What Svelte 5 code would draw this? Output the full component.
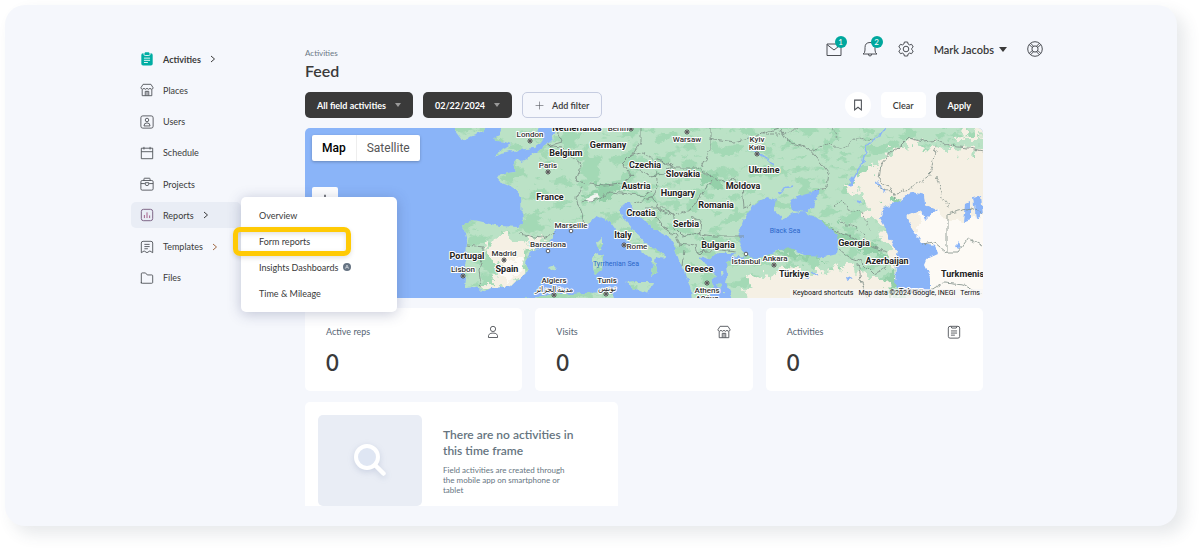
<script>
	let navItems = [
		{name: "Activities", icon: "clipboard", arrow: true, current: true},
		{name: "Places", icon: "store"},
		{name: "Users", icon: "contact"},
		{name: "Schedule", icon: "calendar"},
		{name: "Projects", icon: "briefcase"},
		{name: "Reports", icon: "chart", arrow: true, open: true},
		{name: "Templates", icon: "template", arrow: true, warm: true},
		{name: "Files", icon: "folder"},
	]
	let reportItems = [
		{name: "Overview"},
		{name: "Form reports", marked: true},
		{name: "Insights Dashboards", badge: true},
		{name: "Time & Mileage"},
	]
	let stats = [
		{name: "Active reps", value: 0, icon: "person"},
		{name: "Visits", value: 0, icon: "store"},
		{name: "Activities", value: 0, icon: "list"},
	]

	let mapType = "Map"

	// map labels, x/y is the middle of the text
	let countries = [
		["Netherlands", 577, 128], ["Germany", 608, 145], ["Belgium", 566, 153], ["France", 550, 197],
		["Czechia", 645, 165], ["Slovakia", 683, 174], ["Austria", 636, 186], ["Hungary", 678, 193],
		["Romania", 716, 205], ["Croatia", 641, 213], ["Serbia", 686, 224], ["Italy", 623, 235],
		["Bulgaria", 718, 245], ["Greece", 699, 269], ["Ukraine", 764, 170], ["Moldova", 743, 186],
		["Portugal", 467, 256], ["Spain", 507, 269], ["Georgia", 854, 243], ["Azerbaijan", 887, 261],
		["Türkiye", 794, 274], ["Turkmenistan", 969, 274],
	]
	let cities = [
		["London", 530, 134], ["Berlin", 618, 128], ["Paris", 548, 165], ["Warsaw", 687, 139],
		["Kyiv", 757, 139], ["Київ", 757, 147], ["Marseille", 571, 225], ["Barcelona", 548, 244],
		["Rome", 637, 246], ["Algiers", 554, 280], ["مدينة الجزائر", 554, 289], ["Tunis", 607, 280],
		["تونس", 607, 288], ["Athens", 707, 290], ["Αθήνα", 707, 298], ["İstanbul", 746, 261],
		["Lisbon", 463, 269], ["Madrid", 504, 253], ["Ankara", 775, 258], ["Tehran", 911, 290],
	]
	let capitals = [
		[530, 141], [631, 129], [548, 172], [687, 132], [757, 154], [624, 245], [554, 295],
		[606, 294], [707, 283], [463, 276], [504, 260], [774, 265],
	]
	let towns = [[571, 231], [548, 251], [746, 254]]
</script>

{#snippet icon(name)}
	<svg class="icon" viewBox="0 0 16 16" aria-hidden="true">
		{#if name === "clipboard"}
			<rect x="1.500" y="1.500" width="13" height="14" rx="2" fill="#00ada3" stroke="none" />
			<path d="M4.500 1v1.600q0 1.400 1.400 1.400h4.200q1.400 0 1.400-1.400V1" stroke="#f5f7fc" />
			<rect x="5.500" y=".3" width="5" height="2.500" rx=".6" fill="#00ada3" stroke="none" />
			<path d="M4.500 7h7M4.500 9.500h7M4.500 12h4.500" stroke="#fff" />
		{:else if name === "store"}
			<path d="M3.500 1.500h9l2.500 4q-.3 1.700-1.800 1.700T11.500 5.800Q10.800 7.200 9.700 7.200T8 5.800Q7.300 7.200 6.200 7.200T4.500 5.800Q4 7.200 2.800 7.200T1 5.500zM2.500 7.500V14.500h11V7.500M6 14.500V9.500h4v5M8 9.500v5" />
		{:else if name === "contact"}
			<rect x="1" y="1" width="14" height="14" rx="2.200" />
			<circle cx="8" cy="5.700" r="2" />
			<path d="M4.500 12.500q0-3.500 3.500-3.500t3.500 3.500z" />
		{:else if name === "calendar"}
			<path d="M1.500 2.500h13v12h-13zM1.500 6.500h13M4.500 1v3M11.500 1v3" />
		{:else if name === "briefcase"}
			<rect x="1" y="4" width="14" height="11" rx="1.500" />
			<path d="M4.500 4V2.200q0-.8.8-.8h5.400q.8 0 .8.800V4M1 7.500h4.500M10.500 7.500H15M6 6.500h4v1.700q0 1.600-2 1.600t-2-1.600z" />
		{:else if name === "chart"}
			<rect x="1.500" y="1.500" width="13" height="13" rx="2.500" stroke="#6f5478" />
			<path d="M5 8v3.500M8 5v6.500M11 8.500v3" stroke="#9b4c7c" />
		{:else if name === "template"}
			<path d="M1.500 14.500V3.500q0-2 2-2h9q2 0 2 2v11l-3.200-2-3.300 2-3.300-2zM5 5h6M5 7.500h6M5 10h4" />
		{:else if name === "folder"}
			<path d="M1.500 14V3.200q0-1 1-1h3.800l2 2.300H13.500q1 0 1 1V13q0 1-1 1h-11q-1 0-1-1z" />
		{:else if name === "person"}
			<circle cx="8" cy="4.500" r="3" />
			<path d="M2.800 14.300q-.6-5.100 5.200-5.100t5.200 5.100z" />
		{:else if name === "list"}
			<rect x="1.500" y="1.500" width="13" height="13.500" rx="2" />
			<path d="M4.500 1.500l1 2h5l1-2M4.500 6.800h7M4.500 9.200h7M4.500 11.600h4.500" />
		{:else if name === "mail"}
			<path d="M1 3h14v11.500H1zM1 3.500l7 5.500 7-5.500" />
		{:else if name === "bell"}
			<path d="M1 13q2-.8 2-4V6.500Q3 1.500 8 1.500t5 5V9q0 3.200 2 4zM6.300 13q.1 2 1.700 2t1.700-2" />
		{:else if name === "gear"}
			<path d="M6.400 1h3.200l.5 2 1.500.9 2-.6 1.600 2.700-1.500 1.400v1.200l1.500 1.400-1.600 2.700-2-.6-1.500.9-.5 2H6.400l-.5-2-1.500-.9-2 .6L.8 10l1.500-1.400V7.400L.8 6l1.600-2.700 2 .6L5.900 3z" />
			<circle cx="8" cy="8" r="2.800" />
		{:else if name === "help"}
			<circle cx="8" cy="8" r="7.300" />
			<circle cx="8" cy="8" r="3.100" />
			<path d="M2.300 3.600l3 3M3.600 2.300l3 3M13.700 3.600l-3 3M12.400 2.300l-3 3M2.300 12.400l3-3M3.600 13.700l3-3M13.700 12.400l-3-3M12.400 13.700l-3-3" />
		{:else if name === "bookmark"}
			<path d="M3.500 1.500h9v13l-4.500-3.500-4.500 3.500z" />
		{:else if name === "plus"}
			<path d="M8 1v14M1 8h14" />
		{/if}
	</svg>
{/snippet}

<div class="panel">
	<aside>
		<ul class="nav">
			{#each navItems as item (item.name)}
				<li class:open={item.open}>
					<a href="#{item.name}" class:current={item.current}>
						{@render icon(item.icon)}
						<span>{item.name}</span>
						{#if item.arrow}
							<svg class="arrow" class:warm={item.warm} viewBox="0 0 6 8" aria-hidden="true"><path d="M1 1l3.500 3L1 7" /></svg>
						{/if}
					</a>
					{#if item.open}
						<ul class="submenu">
							{#each reportItems as report (report.name)}
								<li class:marked={report.marked}>
									<a href="#{report.name}">
										{report.name}
										{#if report.badge}
											<svg class="badgeIcon" viewBox="0 0 8 8" aria-hidden="true">
												<circle cx="4" cy="4" r="4" fill="#667382" />
												<path d="M2.300 5.700L4 2l1.700 3.700M3 4.600h2" fill="none" stroke="#cfd5dc" stroke-width=".8" />
											</svg>
										{/if}
									</a>
								</li>
							{/each}
						</ul>
					{/if}
				</li>
			{/each}
		</ul>
	</aside>

	<main>
		<header>
			<div class="titles">
				<p>Activities</p>
				<h1>Feed</h1>
			</div>
			<div class="topbar">
				<button class="topIcon" aria-label="Messages">{@render icon("mail")}<span class="count">1</span></button>
				<button class="topIcon" aria-label="Notifications">{@render icon("bell")}<span class="count">2</span></button>
				<button class="topIcon" aria-label="Settings">{@render icon("gear")}</button>
				<button class="user">Mark Jacobs <span class="caret"></span></button>
				<button class="topIcon" aria-label="Help">{@render icon("help")}</button>
			</div>
		</header>

		<div class="content">
			<div class="toolbar">
				<button class="dark">All field activities <span class="caret"></span></button>
				<button class="dark">02/22/2024 <span class="caret"></span></button>
				<button class="outline">{@render icon("plus")}Add filter</button>
				<button class="round" aria-label="Saved filters">{@render icon("bookmark")}</button>
				<button class="light">Clear</button>
				<button class="dark">Apply</button>
			</div>

			<section class="map" aria-label="Map">
				<svg class="mapCanvas" viewBox="305 128 678 170" preserveAspectRatio="xMidYMid slice">
					<defs>
						<filter id="coast" filterUnits="userSpaceOnUse" x="295" y="118" width="700" height="190">
							<feTurbulence type="fractalNoise" baseFrequency=".16" numOctaves="2" seed="4" />
							<feDisplacementMap in="SourceGraphic" scale="6" xChannelSelector="R" yChannelSelector="G" />
						</filter>
						<!-- woodland patches -->
						<filter id="woods" filterUnits="userSpaceOnUse" x="295" y="118" width="700" height="190" color-interpolation-filters="sRGB">
							<feTurbulence type="fractalNoise" baseFrequency=".05 .09" numOctaves="4" seed="11" />
							<feColorMatrix values="0 0 0 0 .64  0 0 0 0 .85  0 0 0 0 .71  14 0 0 0 -7.400" />
							<feComposite in2="SourceGraphic" operator="in" />
						</filter>
						<!-- breaks up the edge of the dry land -->
						<filter id="ragged" filterUnits="userSpaceOnUse" x="295" y="118" width="700" height="190">
							<feTurbulence type="fractalNoise" baseFrequency=".09" numOctaves="3" seed="7" />
							<feDisplacementMap in="SourceGraphic" scale="26" xChannelSelector="R" yChannelSelector="G" />
						</filter>
						<path id="land" d="M451 122l5 10 6 8 8-3 13-5 4-10zM502 122v6l-3 7-5 3 4 3 7 1 6 2-7 4-7 4-3 5 8-4 8-2 6 1 9-3 9-1 7-5 2-5-5-4-1-10zM556 122l-1 10-3 7-7 7-8 6-8 4-4 4-4 2-4-3-3 4 2 9-8 1-11 3 2 5 8 3 8 5 6 7 1 27-4 4-18-1-27-6-10 6 4 14-1 22-4 10 4 6-1 10 11-1 5 5 11-4 20-2 9-9 8-6-3-9 6-11 15-6 7-8v-10l18 1 15-4 10-8 12 5 7 10 13 11 13 9 7 6 5 7-3 13 7-5-3-10 1-6 9 2-4-7-16-8-10-11-10-11-5-10 5-9h6l4 10 10 9 13 10 13 7 4 11 5 14 5 8 3 10 3 10 1 10 17-4 5-10-3-8 5-4-10-9-7-10 10 3 10-6h17l-10 9 2 12-2 9 4 8 5 16H995V122zM500 303l28-4 25-5 20 0 30-2 9 0 4 12zM597 241l5-3v11l-3 2zM593 257l4-4 6 3-1 14-6 4-3-6zM625 283l12-1 16 0-5 12-14-6zM548 267l5-2 3 3-4 3zM720 272l3 0 1 3-4 1zM717 284l4 1-2 3zM722 291l3 0-1 3z" />
						<clipPath id="landClip"><use href="#land" /></clipPath>
					</defs>

					<rect x="295" y="118" width="700" height="190" fill="#8ab4f8" />
					<g filter="url(#coast)">
						<use href="#land" fill="#bbe2c6" />
						<use href="#land" filter="url(#woods)" />
						<g clip-path="url(#landClip)">
							<g filter="url(#ragged)">
								<!-- dry land -->
								<g fill="#f5f0e4">
									<path d="M490 243l10-6 18 3 14-2-2 14-6 14 4 8-12 10-16 6-18 0 8-10 10-3 2-8-12-10-2-8zM530 240l13 0 3 4-12 4z" />
									<path d="M748 308l-2-19 6-12 20-4 20-4 24 3 20-6 22 3 14 8 14 0 8 12 2 22z" />
									<path d="M845 186l12-12 16-4 6-10 12-8 10-8 10-2 12 5 14-3 12 6 64 2v162H905l-10-30-6-40-10-22-14-12-6-14z" />
									<path d="M954 138l12-8 20-2 22-4v10l-32 4z" />
								</g>
								<path d="M925 212l30 6 50-4v100h-80l-8-34 4-28-12-20z" fill="#fdfaf5" />
								<path d="M504 262l12-4 8 8-6 10-10 2z" fill="#fdfaf5" />
								<g fill="#94d0a9">
									<path d="M805 215l22 6 18 14 24 10 18 10-4 3-24-8-18-8-16-10z" />
									<path d="M763 254l24-8 20 8 24 2-20 5-26-6z" />
									<path d="M590 190l14-4 22-2 8 4-16 8-20 5-10-2zM700 172l10 2 16 12-4 4-18-8z" />
									<path d="M885 205l14-6 4 3-16 10zM886 276l8-2 2 16-6 4z" />
								</g>
							</g>
							<path d="M585 198l10-5 5 3-12 7z" fill="#f3f5f1" />
						</g>
						<!-- seas and lakes -->
						<g fill="#8ab4f8">
							<path d="M742 252l-4-15 6-18 8-12 8-6 7-4 10 3-4 10 10 9 10-6 12-1 11 6 16 12 8 10-3 14-12 3-18-1-17-9-13 4-14 6-10 1z" />
							<path d="M728 258l10-2 8 1-6 4-10 0z" />
							<path d="M789 203l5-5 9-3 18-5-6 10-2 9-8 3-12-2z" />
							<path d="M880 218l3-10 17-8 12-8 12 3 1 10 12 5-7 5-5 5-4-10-14 6 6 14 9 13 12 2 4 8-11 5-3 7 6 13v14l-8 3-27-7 1-27 2-10-9-13-5-13z" />
							<path d="M964 222l2-18 4-2 0 18zM973 198l8-2 2 18-7 4zM955 246l4-4 2 5-4 2z" />
							<path d="M848 184l4-8 2 4-4 6zM846 278l5-2 2 2-6 3zM805 279l4-3 1 4z" />
						</g>
						<path class="river" d="M888 122l-8 14-14 10-3 16-10 18M780 194l4-6 9-2M752 150l14 8 8 8M856 200l6 2M876 182l10 10M812 272l6 4" />
						<path class="border" d="M547 145l14 2 8 8 10 6 1 8-4 12 10 2M582 186l-6 12 2 8 4 6 2 16M556 232l-16 6-20-4M467 245l16 2 0 10-4 12 2 20M590 184l14 2 18-2 10-8-10-12 8-8 12-4 14 8 16 4-8 10-14 2-16-8M582 202l14-2 14-8 20 2 14 2 8-6M641 128l0 14-8 12M656 158l18 10 24 0 10 8 18 6 10-5M710 128l0 22-8 18M708 138l26 4 22-6 24-8M656 172l2 16-6 10 8 12 14 6 16-6 10-14 12-16M730 178l12 8 2 22 8-4M690 216l12 6-2 12 14 2 30 0M652 198l-18 4M646 208l18 0 10 8 0 12 8 8 20-4M654 214l10 14 12 8 4 8 16 2 2 10M702 236l2 14-6 6M684 250l-2 16M696 252l24-2 16 2M556 128l6 14-14 4" />
						<path class="border" d="M780 130l8 12 20 6 14 16 6 8-2 16-12 4M832 230l22 8 20 10 14 4M840 250l10 8 12 4 12 12 12-6 6-8M858 264l4 20 6 14M895 198l-4-10-12-8 2-16 10-12 10-6 8-8 14 4 14-2 12 6 20 2 20 4M922 244l12-2 12 10h12l10-14 14 8M947 252v-38l24-6 14 6M930 291l14-8 20 2 18 10" />
						<path class="border dashed" d="M760 134l24 0 14-6M812 150l16-6 14 4 16-10 14 2M832 128l6 12M834 206l8-6 6 10 14 2 8 18M878 186l16 8 12-4 24-14 6-30M936 176l6 22 8 10M840 222l14 4 12 12" />
					</g>

					{#each countries as [name, x, y]}
						<text class="country" {x} y={y + 3}>{name}</text>
					{/each}
					{#each cities as [name, x, y]}
						<text class="city" {x} y={y + 3}>{name}</text>
					{/each}
					<text class="sea" x="785" y="233">Black Sea</text>
					<text class="sea" x="616" y="266">Tyrrhenian Sea</text>
					{#each capitals as [cx, cy]}
						<circle {cx} {cy} r="2" fill="#fff" stroke="#222" stroke-width=".8" />
						<circle {cx} {cy} r="1" fill="#222" />
					{/each}
					{#each towns as [cx, cy]}
						<circle {cx} {cy} r="1.800" fill="#fff" stroke="#444" stroke-width=".8" />
					{/each}
				</svg>
				<div class="mapTypes">
					<button class:selected={mapType === "Map"} on:click={() => mapType = "Map"}>Map</button>
					<button class:selected={mapType === "Satellite"} on:click={() => mapType = "Satellite"}>Satellite</button>
				</div>
				<button class="zoomIn" aria-label="Zoom in">{@render icon("plus")}</button>
				<div class="mapCredits">
					<a href="#shortcuts">Keyboard shortcuts</a>
					<span>Map data ©2024 Google, INEGI</span>
					<a href="#terms">Terms</a>
				</div>
			</section>

			<div class="stats">
				{#each stats as stat (stat.name)}
					<section class="stat">
						<div class="statHead"><h2>{stat.name}</h2>{@render icon(stat.icon)}</div>
						<strong>{stat.value}</strong>
					</section>
				{/each}
			</div>

			<section class="empty">
				<div class="picture">
					<svg viewBox="0 0 40 40" aria-hidden="true">
						<circle cx="17" cy="16" r="11" fill="#dfe6f3" stroke="#fff" stroke-width="4" />
						<path d="M25 24l8.500 8.500" stroke="#fff" stroke-width="4.500" stroke-linecap="round" />
					</svg>
				</div>
				<div class="emptyText">
					<h3>There are no activities in this time frame</h3>
					<p>Field activities are created through the mobile app on smartphone or tablet</p>
				</div>
			</section>
		</div>
	</main>
</div>

<style>
	:global(body) {
		background-color: #ffffff;
		font-family: Lato, "Liberation Sans", sans-serif;
		color: #3a3a3a;
	}

	*, *::after {
		box-sizing: border-box;
	}

	h1, h2, h3, p, ul {
		margin: 0;
		padding: 0;
	}

	ul {
		list-style: none;
	}

	a {
		color: inherit;
		text-decoration: none;
	}

	button {
		border: none;
		margin: 0;
		padding: 0;
		background-color: transparent;
		font-family: inherit;
		color: inherit;
		cursor: pointer;
	}

	.icon {
		display: block;
		flex: none;
		width: 14px;
		height: 14px;
		fill: none;
		stroke: #4c4f55;
		stroke-width: 1;
	}

	.panel {
		display: grid;
		grid-template-columns: 110px minmax(0, 1fr);
		column-gap: 64px;
		margin: 5px 25px 25px 5px;
		padding: 0 134px 20px 126px;
		background-color: #f5f7fc;
		border-radius: 20px;
		box-shadow: 8px 8px 16px rgba(60, 70, 90, 0.12);
	}

	/* sidebar */
	.nav {
		display: flex;
		flex-direction: column;
		justify-content: space-between;
		height: 245px;
		margin-top: 41px;
	}

	.nav a {
		display: flex;
		align-items: center;
		height: 26px;
		font-size: 9px;
	}

	.nav > li > a {
		gap: 9px;
		padding-left: 9px;
	}

	.nav .current {
		font-weight: 700;
	}

	.open {
		position: relative;
		background-color: #e9edf5;
		border-radius: 5px;
	}

	.arrow {
		width: 6px;
		height: 8px;
		fill: none;
		stroke: #3a3a3a;
	}

	.arrow.warm {
		stroke: #a06a45;
	}

	.submenu {
		position: absolute;
		z-index: 2;
		top: -5px;
		left: 110px;
		width: 156px;
		padding: 5px 0 6px;
		background-color: #ffffff;
		border-radius: 5px;
		box-shadow: 0 2px 14px rgba(50, 60, 110, 0.28);
	}

	.submenu a {
		gap: 5px;
		padding-left: 18px;
		white-space: nowrap;
	}

	.marked {
		position: relative;
	}

	.marked::after {
		content: "";
		position: absolute;
		top: -1px;
		left: -8px;
		width: 118px;
		height: 29px;
		border: 5px solid #ffca05;
		border-radius: 7px;
		box-shadow: 0 2px 5px rgba(0, 0, 0, 0.12), inset 0 2px 5px rgba(0, 0, 0, 0.12);
		pointer-events: none;
	}

	.badgeIcon {
		width: 8px;
		height: 8px;
	}

	/* header */
	header {
		display: flex;
		justify-content: space-between;
		height: 87px;
	}

	.titles {
		padding-top: 42px;
	}

	.titles p {
		font-size: 8px;
		line-height: 12px;
		color: #6b7785;
	}

	h1 {
		font-size: 16px;
		line-height: 24px;
		font-weight: 600;
	}

	.topbar {
		display: flex;
		align-items: center;
		gap: 20px;
		height: 32px;
		margin-top: 28px;
	}

	.topIcon {
		position: relative;
	}

	.topIcon .icon {
		width: 16px;
		height: 16px;
	}

	.count {
		position: absolute;
		top: -5px;
		right: -5px;
		width: 12px;
		height: 12px;
		border-radius: 50%;
		background-color: #00a79d;
		color: #ffffff;
		font-size: 8px;
		line-height: 12px;
	}

	.user {
		display: flex;
		align-items: center;
		gap: 5px;
		font-size: 11px;
		font-weight: 600;
	}

	.caret {
		border: 4px solid transparent;
		border-top: 5px solid currentColor;
		border-bottom: none;
	}

	/* toolbar */
	.content {
		margin-right: 60px;
	}

	.toolbar {
		display: flex;
		gap: 10px;
		height: 26px;
		margin-bottom: 10px;
	}

	.toolbar button {
		display: flex;
		align-items: center;
		border-radius: 5px;
		padding: 0 12px;
		font-size: 9px;
		font-weight: 600;
		white-space: nowrap;
	}

	.toolbar .dark {
		gap: 9px;
		background-color: #3a3a3a;
		color: #ffffff;
		font-weight: 700;
	}

	.toolbar .caret {
		border-width: 4px 3px 0;
		color: #9a9a9a;
	}

	.toolbar .outline {
		gap: 8px;
		border: 1px solid #c5cce0;
	}

	.outline .icon {
		width: 9px;
		height: 9px;
	}

	.toolbar .round {
		justify-content: center;
		width: 26px;
		margin-left: auto;
		padding: 0;
		border-radius: 50%;
		background-color: #ffffff;
	}

	.round .icon {
		width: 12px;
		height: 12px;
		stroke-width: 1.4;
	}

	.toolbar .light {
		background-color: #ffffff;
	}

	/* map */
	.map {
		position: relative;
		height: 170px;
		margin-bottom: 10px;
		border-radius: 5px 5px 0 0;
		overflow: hidden;
		font-family: Roboto, "Liberation Sans", sans-serif;
	}

	.mapCanvas {
		display: block;
		width: 100%;
		height: 100%;
	}

	.mapCanvas text {
		text-anchor: middle;
		paint-order: stroke;
		stroke: #ffffff;
		stroke-width: 2px;
		stroke-linejoin: round;
	}

	.country {
		font-size: 9px;
		font-weight: 700;
		fill: #222222;
	}

	.city {
		font-size: 8px;
		font-weight: 500;
		fill: #333333;
	}

	.mapCanvas .sea {
		font-size: 7px;
		fill: #2a66c8;
		stroke: none;
	}

	.border {
		fill: none;
		stroke: #7b8a84;
		stroke-width: 0.8;
	}

	.dashed {
		stroke-dasharray: 2 1;
	}

	.river {
		fill: none;
		stroke: #8ab4f8;
		stroke-width: 1.5;
	}

	.mapTypes {
		position: absolute;
		top: 7px;
		left: 7px;
		display: flex;
		height: 26px;
		background-color: #ffffff;
		border-radius: 2px;
		box-shadow: 0 1px 3px rgba(0, 0, 0, 0.25);
	}

	.mapTypes button {
		padding: 0 10px;
		font-size: 12px;
		color: #565656;
	}

	.mapTypes button + button {
		border-left: 1px solid #eeeeee;
	}

	.mapTypes .selected {
		font-weight: 500;
		color: #000000;
	}

	.zoomIn {
		position: absolute;
		top: 59px;
		left: 7px;
		display: flex;
		justify-content: center;
		align-items: center;
		width: 26px;
		height: 26px;
		background-color: #ffffff;
		border-radius: 2px;
	}

	.zoomIn .icon {
		width: 12px;
		height: 12px;
		stroke-width: 2;
	}

	.mapCredits {
		position: absolute;
		right: 0;
		bottom: 0;
		display: flex;
		gap: 5px;
		padding: 0 3px;
		background-color: rgba(245, 245, 245, 0.75);
		font-size: 7px;
		line-height: 9px;
		color: #111111;
	}

	/* cards */
	.stats {
		display: grid;
		grid-template-columns: repeat(3, minmax(0, 1fr));
		gap: 13px;
		margin-bottom: 11px;
	}

	.stat {
		height: 83px;
		padding: 17px 22px 0 21px;
		background-color: #ffffff;
		border-radius: 5px;
	}

	.statHead {
		display: flex;
		justify-content: space-between;
		align-items: center;
		margin-bottom: 10px;
	}

	h2 {
		font-size: 9px;
		line-height: 14px;
		font-weight: 400;
		color: #566573;
	}

	.stat strong {
		display: block;
		font-size: 22px;
		line-height: 28px;
		font-weight: 600;
	}

	.empty {
		display: flex;
		gap: 21px;
		width: 313px;
		height: 104px;
		padding: 13px 13px 0;
		background-color: #ffffff;
		border-radius: 5px 5px 0 0;
		overflow: hidden;
	}

	.picture {
		display: flex;
		flex: none;
		justify-content: center;
		align-items: center;
		width: 104px;
		height: 91px;
		background-color: #e9edf5;
		border-radius: 5px;
	}

	.picture svg {
		width: 40px;
		height: 40px;
		filter: drop-shadow(0 2px 3px rgba(80, 100, 150, 0.2));
	}

	.emptyText {
		width: 135px;
		padding-top: 12px;
	}

	h3 {
		margin-bottom: 6px;
		font-size: 12px;
		line-height: 16px;
		font-weight: 600;
		color: #66757f;
	}

	.emptyText p {
		width: 122px;
		font-size: 8px;
		line-height: 10px;
		color: #66757f;
	}
</style>
